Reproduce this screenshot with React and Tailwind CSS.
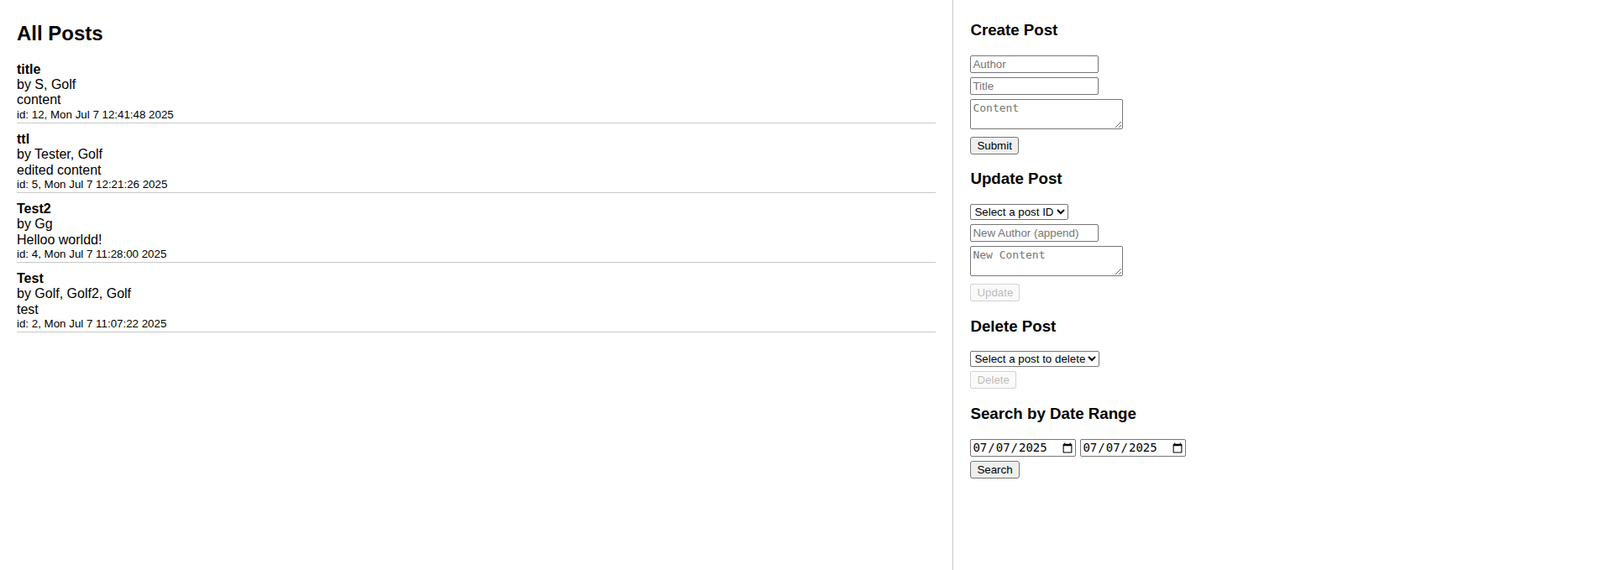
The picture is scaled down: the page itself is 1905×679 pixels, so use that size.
import React, { useState } from 'react';

const posts = [
  { id: 12, title: 'title', authors: 'S, Golf', content: 'content', date: 'Mon Jul 7 12:41:48 2025' },
  { id: 5, title: 'ttl', authors: 'Tester, Golf', content: 'edited content', date: 'Mon Jul 7 12:21:26 2025' },
  { id: 4, title: 'Test2', authors: 'Gg', content: 'Helloo worldd!', date: 'Mon Jul 7 11:28:00 2025' },
  { id: 2, title: 'Test', authors: 'Golf, Golf2, Golf', content: 'test', date: 'Mon Jul 7 11:07:22 2025' },
];

const inputCls =
  'block h-[21px] w-[153px] rounded-[2px] border border-[#767676] bg-white px-[2px] py-[1px] text-[13.33px] leading-[15px] text-black placeholder:text-[#757575] outline-none';
const areaCls =
  "block h-[36px] w-[182px] rounded-[2px] border border-[#767676] bg-white p-[2px] font-['DejaVu_Sans_Mono',monospace] text-[13px] leading-[15px] text-black placeholder:text-[#757575] outline-none";
const btnCls =
  'block h-[21px] rounded-[3px] border border-[#767676] bg-[#efefef] px-[7px] text-[13.33px] leading-[15px] text-black';
const btnOffCls =
  'block h-[21px] rounded-[3px] border border-[#767676]/30 bg-[#efefef]/30 px-[7px] text-[13.33px] leading-[15px] text-[#101010]/30';
const selectCls =
  'block h-[19px] rounded-[2px] border border-[#767676] bg-white text-[13.33px] leading-[15px] text-black';
const dateCls =
  "h-[21px] w-[126px] rounded-[2px] border border-[#767676] bg-white pl-[1px] font-['DejaVu_Sans_Mono',monospace] text-[14px] text-black";
const headCls = 'text-[18.72px] font-bold leading-[21.5px]';

function PostItem({ post }) {
  return (
    <div className="mb-[10px] border-b border-[#c8c8c8] pb-[1px] text-[16px] leading-[18.4px]">
      <div className="font-bold">{post.title}</div>
      <div>by {post.authors}</div>
      <div>{post.content}</div>
      <div className="text-[13.33px] leading-[15.9px]">
        id: {post.id}, {post.date}
      </div>
    </div>
  );
}

export default function App() {
  const [author, setAuthor] = useState('');
  const [title, setTitle] = useState('');
  const [content, setContent] = useState('');
  const [from, setFrom] = useState('2025-07-07');
  const [to, setTo] = useState('2025-07-07');

  return (
    <div className="flex min-h-screen bg-white font-['Liberation_Sans',Arial,sans-serif] text-black">
      {/* Post list */}
      <div className="flex-[3] px-5">
        <h2 className="mt-[26px] mb-[20px] text-[24px] font-bold leading-[27.6px]">All Posts</h2>
        {posts.map((p) => (
          <PostItem key={p.id} post={p} />
        ))}
      </div>

      {/* Side forms */}
      <div className="flex-[2] border-l border-[#c8c8c8] px-5">
        <h3 className={`${headCls} mt-[25px]`}>Create Post</h3>
        <input className={`${inputCls} mt-[19px]`} placeholder="Author" value={author} onChange={(e) => setAuthor(e.target.value)} />
        <input className={`${inputCls} mt-[5px]`} placeholder="Title" value={title} onChange={(e) => setTitle(e.target.value)} />
        <textarea className={`${areaCls} mt-[5px]`} placeholder="Content" value={content} onChange={(e) => setContent(e.target.value)} />
        <button type="button" className={`${btnCls} mt-[9px]`}>Submit</button>

        <h3 className={`${headCls} mt-[18px]`}>Update Post</h3>
        <select className={`${selectCls} mt-[20px]`} defaultValue="">
          <option value="">Select a post ID</option>
          {posts.map((p) => (
            <option key={p.id} value={p.id}>{p.id}</option>
          ))}
        </select>
        <input className={`${inputCls} mt-[5px]`} placeholder="New Author (append)" />
        <textarea className={`${areaCls} mt-[5px]`} placeholder="New Content" />
        <button type="button" disabled className={`${btnOffCls} mt-[9px]`}>Update</button>

        <h3 className={`${headCls} mt-[19px]`}>Delete Post</h3>
        <select className={`${selectCls} mt-[18px]`} defaultValue="">
          <option value="">Select a post to delete</option>
          {posts.map((p) => (
            <option key={p.id} value={p.id}>{p.title}</option>
          ))}
        </select>
        <button type="button" disabled className={`${btnOffCls} mt-[5px]`}>Delete</button>

        <h3 className={`${headCls} mt-[19px]`}>Search by Date Range</h3>
        <div className="mt-[20px] flex gap-[5px]">
          <input type="date" className={dateCls} value={from} onChange={(e) => setFrom(e.target.value)} />
          <input type="date" className={dateCls} value={to} onChange={(e) => setTo(e.target.value)} />
        </div>
        <button type="button" className={`${btnCls} mt-[5px]`}>Search</button>
      </div>
    </div>
  );
}
